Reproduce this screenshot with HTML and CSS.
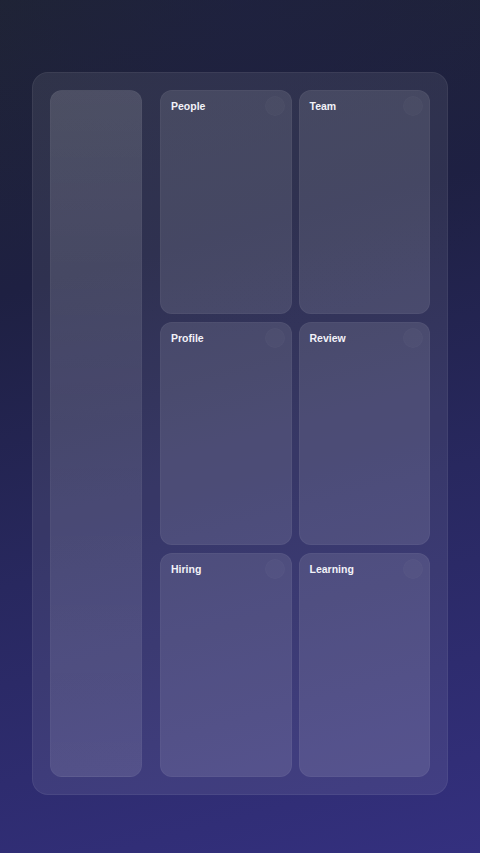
FILE: index.html
```html
<!DOCTYPE html>
<html lang="en">
<head>
<meta charset="utf-8">
<title>Dashboard</title>
<link rel="stylesheet" href="styles.css">
</head>
<body>
<main class="shell">
  <div class="panel">
    <aside class="sidebar"></aside>
    <section class="grid">
      <div class="card"><h2 class="card-title">People</h2><span class="dot"></span></div>
      <div class="card"><h2 class="card-title">Team</h2><span class="dot"></span></div>
      <div class="card"><h2 class="card-title">Profile</h2><span class="dot"></span></div>
      <div class="card"><h2 class="card-title">Review</h2><span class="dot"></span></div>
      <div class="card"><h2 class="card-title">Hiring</h2><span class="dot"></span></div>
      <div class="card"><h2 class="card-title">Learning</h2><span class="dot"></span></div>
    </section>
  </div>
</main>
</body>
</html>
```

FILE: styles.css
```css
* { box-sizing: border-box; }
html, body { margin: 0; height: 100%; }
body {
  width: 480px;
  height: 853px;
  overflow: hidden;
  font-family: "Liberation Sans", Arial, sans-serif;
  background:
    radial-gradient(ellipse 70% 40% at 50% 0%, rgba(30,32,70,0.5), transparent),
    linear-gradient(165deg, #1f2433 0%, #1e2042 30%, #28285f 60%, #34307f 100%);
}
.shell {
  padding: 72px 32px 0 32px;
}
.panel {
  display: flex;
  gap: 18px;
  padding: 17px;
  border-radius: 16px;
  background: rgba(255,255,255,0.08);
  border: 1px solid rgba(255,255,255,0.06);
  height: 723px;
}
.sidebar {
  width: 92px;
  flex: none;
  border-radius: 12px;
  background: linear-gradient(180deg, rgba(255,255,255,0.14) 0%, rgba(255,255,255,0.09) 50%, rgba(255,255,255,0.11) 100%);
  border: 1px solid rgba(255,255,255,0.03);
}
.grid {
  flex: 1;
  display: grid;
  grid-template-columns: 1fr 1fr;
  grid-template-rows: repeat(3, 1fr);
  column-gap: 7px;
  row-gap: 8px;
}
.card {
  position: relative;
  border-radius: 12px;
  background: rgba(255,255,255,0.11);
  border: 1px solid rgba(255,255,255,0.04);
  padding: 9px 10px;
}
.card-title {
  margin: 0;
  font-size: 10.5px;
  font-weight: 700;
  line-height: 12px;
  color: #f2f2f8;
}
.dot {
  position: absolute;
  top: 5px;
  right: 6px;
  width: 20px;
  height: 20px;
  border-radius: 50%;
  background: rgba(255,255,255,0.025);
  box-shadow: inset 0 0 0 1px rgba(255,255,255,0.02);
}
```
